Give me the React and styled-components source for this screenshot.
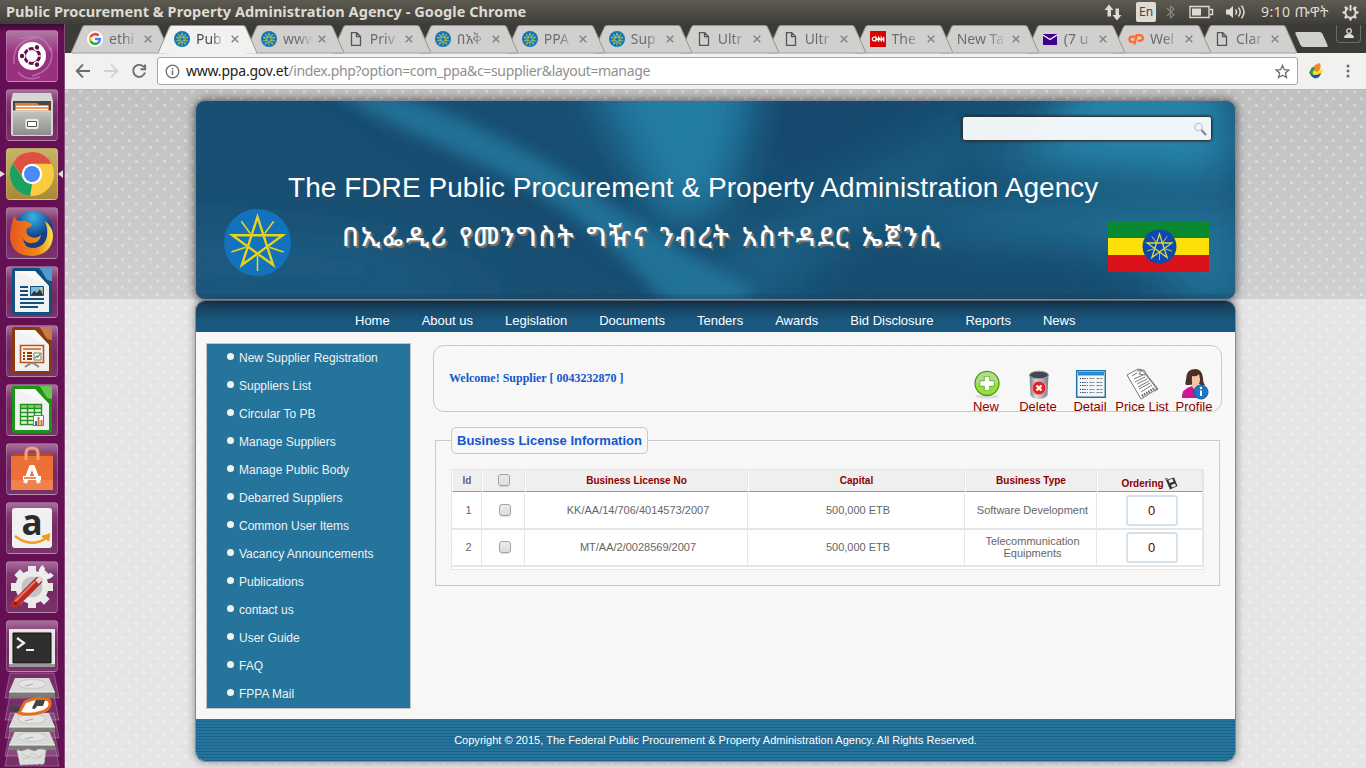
import React from "react";
import styled, { createGlobalStyle, css } from "styled-components";

const ui = '"Noto Sans", "Open Sans", "Noto Sans Ethiopic", "Abyssinica SIL", sans-serif';
const arial = '"Liberation Sans", Arial, sans-serif';

const Global = createGlobalStyle`
  * { box-sizing: border-box; }
  body { margin: 0; overflow: hidden; background: #e6e6e6; }
`;

const Desktop = styled.div`
  width: 1366px;
  height: 768px;
  overflow: hidden;
  display: grid;
  grid-template: 24px 744px / 65px 1301px;
  font-family: ${arial};
`;

/* ---------- top panel ---------- */
const Panel = styled.header`
  grid-column: 1 / 3;
  display: flex;
  align-items: center;
  justify-content: space-between;
  padding: 0 7px 0 6px;
  background: linear-gradient(#5d5b50, #3f3e39);
  color: #dfdbd2;
  font-family: ${ui};
`;
const WindowTitle = styled.div`
  font-weight: 700;
  font-size: 14.5px;
  letter-spacing: 0.055px;
  line-height: 22px;
  padding-bottom: 2px;
  white-space: nowrap;
`;
const Tray = styled.div`
  display: flex;
  align-items: center;
  height: 24px;
`;
const Lang = styled.span`
  width: 20px;
  height: 20px;
  margin: 0 10px 0 14px;
  border-radius: 2px;
  background: #dfdbd2;
  color: #45443e;
  font-size: 12px;
  line-height: 20px;
  text-align: center;
`;
const Clock = styled.span`
  width: 68px;
  margin: 0 13px 0 15px;
  font-size: 14px;
  letter-spacing: 0.4px;
  line-height: 24px;
  white-space: nowrap;
`;

/* ---------- launcher ---------- */
const Launcher = styled.aside`
  display: flex;
  flex-direction: column;
  align-items: center;
  gap: 7px;
  padding: 6px 1px 0 0;
  background: linear-gradient(#3d0a33 0, #651054 8px, #651054 100%);
  border-right: 1px solid #8a4c7d;
`;
const Tile = styled.div`
  position: relative;
  flex: none;
  width: 52px;
  height: 52px;
  border-radius: 4px;
  border: 1px solid rgba(255, 255, 255, 0.2);
  background: ${(p) => p.$bg || "linear-gradient(#a8709b 0, #80386f 12px, #742864 30px, #7b336b 100%)"};
  svg { display: block; margin: -1px; }
`;
const Marker = styled.i`
  position: absolute;
  top: 21px;
  ${(p) => (p.$right ? "right: -6px; border-right: 5px solid #ddd;" : "left: -8px; border-left: 6px solid #ddd;")}
  border-top: 4px solid transparent;
  border-bottom: 4px solid transparent;
`;
const Stack = styled.svg`
  flex: none;
  display: block;
  margin-top: -7px;
`;

/* ---------- browser ---------- */
const Browser = styled.main`
  display: flex;
  flex-direction: column;
  min-width: 0;
`;
const TabStrip = styled.div`
  display: flex;
  height: 29px;
  padding: 1px 3px 0 6px;
  background: #3c3b37;
`;
const TabBox = styled.div`
  position: relative;
  flex: none;
  display: flex;
  align-items: center;
  width: 99px;
  height: 28px;
  margin-right: ${(p) => (p.$order < 9 ? -12.05 : -12.9)}px;
  padding: 0 12px 0 ${(p) => (p.$noIcon ? 17 : 16)}px;
  z-index: ${(p) => (p.$active ? 30 : 20 - p.$order)};
  font-family: ${ui};
  font-size: 14px;
  color: ${(p) => (p.$active ? "#4a4a4a" : "#6d6d6d")};
`;
const TabShape = styled.svg`
  position: absolute;
  left: 0;
  top: 0;
  z-index: -1;
`;
const TabLabel = styled.span`
  flex: none;
  width: ${(p) => (p.$wide ? 50 : 33)}px;
  margin-left: ${(p) => (p.$wide ? 0 : 6)}px;
  white-space: nowrap;
  line-height: 24px;
  mask-image: linear-gradient(90deg, #000 ${(p) => (p.$wide ? 30 : 15)}px, transparent ${(p) => (p.$wide ? 50 : 30)}px);
`;
const CloseX = styled.svg`
  flex: none;
  margin-left: ${(p) => (p.$wide ? 5 : 2)}px;
`;
const NewTab = styled.i`
  width: 27px;
  height: 15px;
  margin: 7px 0 0 14px;
  flex: none;
  border-radius: 2px;
  transform: skewX(24deg);
  background: #d2d0ce;
`;
const UserButton = styled.div`
  width: 25px;
  height: 18px;
  margin-left: 11px;
  border: 1px solid #6d6b66;
  border-top: 0;
  border-radius: 0 0 4px 4px;
  display: grid;
  place-items: center;
`;
const Toolbar = styled.div`
  height: 37px;
  display: flex;
  align-items: center;
  padding: 0 8px 0 10px;
  background: #f2f1f0;
  border-bottom: 1px solid #b9b8b6;
`;
const NavIcons = styled.div`
  display: flex;
  gap: 12px;
  width: 82px;
`;
const Address = styled.div`
  flex: none;
  width: 1141px;
  height: 28px;
  display: flex;
  align-items: center;
  padding: 0 7px;
  border: 1px solid #a9a8a6;
  border-radius: 3px;
  background: #fff;
  font-family: ${ui};
  font-size: 14px;
  color: #8f8f8f;
  b { font-weight: 400; color: #222; letter-spacing: -0.2px; }
`;
const Url = styled.span`
  flex: 1;
  margin-left: 6px;
  letter-spacing: -0.34px;
  line-height: 24px;
`;

/* ---------- web page ---------- */
const dot = (c) => `conic-gradient(from 270deg at 3px 3px, ${c} 90deg, transparent 0)`;
const Page = styled.div`
  flex: 1;
  padding: 10px 130px 0;
  background-color: #e5e5e5;
  background-image: ${dot("rgba(255,255,255,.3)")}, ${dot("rgba(255,255,255,.3)")},
    linear-gradient(#c0c0c0, #d0d0d0);
  background-size: 14px 14px, 14px 14px, 100% 209px;
  background-position: 0 0, 7px 7px, 0 0;
  background-repeat: repeat, repeat, no-repeat;
`;
const Banner = styled.div`
  position: relative;
  height: 200px;
  border: 1px solid #8b8792;
  border-radius: 10px;
  overflow: hidden;
  box-shadow: 0 0 10px rgba(0, 0, 0, 0.6);
  background: #194f72;
  display: grid;
  grid-template: 107px 1fr / 92px 1fr 127px;
  isolation: isolate;
  color: #fff;
`;
const Waves = styled.svg`
  position: absolute;
  inset: 0;
  z-index: -1;
`;
const TopLine = styled.div`
  grid-column: 1 / 4;
  display: flex;
  flex-direction: column;
  align-items: flex-end;
  padding: 15px 23px 0 0;
`;
const Search = styled.div`
  width: 250px;
  height: 25px;
  display: flex;
  align-items: center;
  justify-content: flex-end;
  padding-right: 4px;
  border: 1px solid #30353b;
  border-radius: 3px;
  background: rgba(255, 255, 255, 0.93);
  box-shadow: 0 0 3px rgba(0, 0, 0, 0.7);
`;
const SiteTitle = styled.h1`
  align-self: flex-start;
  margin: 29px 0 0 92px;
  font: 400 28px/36px ${arial};
  white-space: nowrap;
  letter-spacing: 0.045px;
`;
const EmblemCell = styled.div`
  padding: 1px 0 0 28px;
`;
const Amharic = styled.h2`
  margin: 8px 0 0 54px;
  font: 500 27px/40px "Noto Sans Ethiopic", "Abyssinica SIL", "FreeSerif", ${arial};
  letter-spacing: 1.8px;
  word-spacing: 2px;
  text-shadow: 2px 2px 1px #85776f;
  white-space: nowrap;
`;
const FlagCell = styled.div`
  padding-top: 13px;
`;
const Body = styled.div`
  height: 462px;
  border: 1px solid #8b8792;
  border-radius: 10px;
  overflow: hidden;
  box-shadow: 0 0 8px rgba(0, 0, 0, 0.4);
  display: grid;
  grid-template: 31px 387px 1fr / 1fr;
  background-color: #f7f7f7;
  background-image: ${dot("#f9f9f9")}, ${dot("#f9f9f9")};
  background-size: 14px 14px;
  background-position: 9px 13px, 2px 6px;
`;
const Menu = styled.nav`
  display: flex;
  gap: 32px;
  padding: 8px 0 0 159px;
  background: linear-gradient(#173c54, #19577f 65%, #1a5880);
  color: #fff;
  font-size: 13px;
  line-height: 24px;
  white-space: nowrap;
`;
const Columns = styled.div`
  display: flex;
  padding: 12px 13px 0 10px;
  gap: 22px;
  align-items: flex-start;
`;
const Side = styled.ul`
  flex: none;
  width: 205px;
  height: 366px;
  margin: -1px 0 0;
  padding: 0 0 0 20px;
  list-style: none;
  border: 1px solid #c3c3c3;
  background: #24749b;
`;
const SideItem = styled.li`
  display: flex;
  align-items: center;
  height: 28px;
  font-size: 12px;
  color: #f2f2f2;
  &::before {
    content: "";
    width: 7px;
    height: 7px;
    margin: -4px 5px 0 0;
    border-radius: 50%;
    background: #f3f3f3;
  }
`;
const Content = styled.div`
  flex: 1;
  padding-top: 1px;
`;
const WelcomeBox = styled.section`
  height: 67px;
  display: flex;
  justify-content: space-between;
  border: 1px solid #c9c9c9;
  border-radius: 11px;
  padding: 0 1px 0 15px;
`;
const Welcome = styled.div`
  margin-top: 24px;
  font: 700 12px/16px "Liberation Serif", "Times New Roman", serif;
  color: #1556cc;
`;
const Actions = styled.div`
  display: flex;
  padding-top: 22px;
`;
const Action = styled.div`
  width: 52px;
  display: flex;
  flex-direction: column;
  align-items: center;
  font-size: 13px;
  line-height: 15px;
  color: #8b0000;
  white-space: nowrap;
  svg { flex: none; margin-bottom: -1px; }
`;
const Fieldset = styled.fieldset`
  margin: 15px 2px 0;
  height: 159px;
  padding: 15px 15px 0;
  border: 1px solid #c9c9c9;
  min-width: 0;
`;
const Legend = styled.legend`
  height: 27px;
  padding: 0 5px;
  border: 1px solid #c9c9c9;
  border-radius: 5px;
  color: #1556cc;
  font: 700 13px/25px ${arial};
`;
const Grid = styled.div`
  width: 753px;
  height: 101px;
  border: 1px solid #e6e6e6;
  background: #fff;
`;
const Row = styled.div`
  display: grid;
  grid-template-columns: 30px 43px 223px 217px 132px 106px;
  height: ${(p) => (p.$head ? 22 : 37)}px;
  margin-bottom: ${(p) => (p.$head ? 1 : 0)}px;
  font-size: ${(p) => (p.$head ? 10 : 11)}px;
  line-height: 12px;
  color: #666;
`;
const cell = css`
  display: flex;
  align-items: center;
  justify-content: center;
  text-align: center;
  border-right: 1px solid #e6e6e6;
`;
const HeadCell = styled.div`
  ${cell}
  font-weight: 700;
  color: ${(p) => (p.$plain ? "#666" : "#8b0000")};
  background: #efefef;
  border-left: 1px solid #fff;
  border-bottom: 1px solid #999;
  padding-top: ${(p) => p.$drop || 0}px;
  padding-bottom: ${(p) => (p.$raise ? 2 : 0)}px;
`;
const Cell = styled.div`
  ${cell}
  border-bottom: 2px solid #e6e6e6;
  padding-left: ${(p) => p.$indent || 0}px;
  padding-bottom: ${(p) => p.$lift || 0}px;
`;
const Check = styled.input`
  appearance: none;
  width: 12px;
  height: 12px;
  margin: 0;
  border: 1px solid #a3a3a3;
  border-radius: 3px;
  background: linear-gradient(#ececec, #dcdcdc);
  box-shadow: 0 1px 1px rgba(0, 0, 0, 0.12);
`;
const Order = styled.span`
  width: 52px;
  height: 31px;
  margin-left: 4px;
  border: 2px solid #d3e2ec;
  border-radius: 3px;
  font-size: 13px;
  line-height: 27px;
  color: #6b0000;
`;
const Footer = styled.footer`
  background: repeating-linear-gradient(#24749b 0 2px, #1d628a 2px 3px);
  color: #fff;
  font-size: 11px;
  letter-spacing: 0.02px;
  line-height: 43px;
  text-align: center;
`;

/* ---------- drawings ---------- */
const starPoints = (cx, cy, r) =>
  [0, 2, 4, 1, 3]
    .map((k) => {
      const a = -Math.PI / 2 + (k * 2 * Math.PI) / 5;
      return `${(cx + r * Math.cos(a)).toFixed(2)},${(cy + r * Math.sin(a)).toFixed(2)}`;
    })
    .join(" ");

function Emblem({ w, h, fill = "#1272bc", stroke = "#e6d41c", sw = 2.4, ray = 1.6 }) {
  return (
    <svg width={w} height={h} viewBox="0 0 68 68" preserveAspectRatio="none" style={{ display: "block" }}>
      <ellipse cx="34" cy="34" rx="34" ry="34" fill={fill} />
      <g stroke={stroke} strokeWidth={sw} fill="none">
        <polygon points={starPoints(34, 35, 27)} />
        {[36, 108, 180, 252, 324].map((d) => (
          <path key={d} d="M34 22.500V7" strokeWidth={ray} transform={`rotate(${d} 34 35)`} />
        ))}
      </g>
    </svg>
  );
}

const TabIcons = {
  google: (
    <svg width="16" height="16" viewBox="0 0 16 16" fill="none" strokeWidth="2.6">
      <circle cx="8" cy="8" r="8" fill="#fff" />
      <path d="M11.6 4.6A4.9 4.9 0 0 0 3.6 6" stroke="#ea4335" />
      <path d="M3.6 5.8a4.9 4.9 0 0 0 0 4.4" stroke="#fbbc05" />
      <path d="M3.6 10a4.9 4.9 0 0 0 7.8 1.6" stroke="#34a853" />
      <path d="M8 8h5a4.9 4.9 0 0 1-1.8 3.8" stroke="#4285f4" strokeWidth="2.3" />
    </svg>
  ),
  star: <Emblem w={16} h={16} fill="#1273bd" stroke="#a3bf55" sw={4} ray={4} />,
  doc: (
    <svg width="16" height="16" viewBox="0 0 16 16">
      <path d="M3.5 1.7h5.2l3.8 3.8v8.8h-9z M8.5 1.9v3.8h3.8" fill="none" stroke="#555" strokeWidth="1.3" />
    </svg>
  ),
  cnn: (
    <svg width="16" height="16" viewBox="0 0 16 16">
      <path fill="#d80000" d="M0 0h16v16H0z" />
      <path d="M5.400 6.100H4.400Q2.300 6.100 2.300 8t2.100 1.900h1.500V6.300l2.700 3.500V6.300l2.700 3.500V6.300l2.500 3.500V5.800" fill="none" stroke="#fff" strokeWidth="1.200" />
    </svg>
  ),
  mail: (
    <svg width="16" height="16" viewBox="0 0 16 16">
      <path fill="#400090" d="M1 3h14v11H1z" />
      <path d="M1 4l7 4.5L15 4" fill="none" stroke="#fff" strokeWidth="1.4" />
    </svg>
  ),
  cp: (
    <svg width="16" height="16" viewBox="0 0 16 16" fill="none" stroke="#ff6c2c" strokeWidth="2.3">
      <path d="M7.500 5.600H4.200a2.700 2.700 0 0 0 0 5.400h1.300M6.200 13.500l2.700-9.400h3a2.900 2.900 0 0 1 0 5.800H10" />
    </svg>
  ),
};

const tabs = [
  ["google", "ethi"], ["star", "Pub", true], ["star", "www"], ["doc", "Priv"],
  ["star", "በአቅ"], ["star", "PPA"], ["star", "Sup"], ["doc", "Ultr"], ["doc", "Ultr"],
  ["cnn", "The"], [null, "New Ta"], ["mail", "(7 u"], ["cp", "Wel"], ["doc", "Clar"],
];

function Tab({ icon, label, active, order }) {
  const fill = active ? "#f2f1f0" : "#d2d0ce";
  return (
    <TabBox $active={active} $noIcon={!icon} $order={order}>
      <TabShape width="99" height="29">
        <path d="M0 28L11.500 2Q12 .5 14 .5H85Q87 .5 87.500 2L99 28Z" fill={fill} />
        <path d="M0 28L11.500 2Q12 .5 14 .5H85Q87 .5 87.500 2L99 28" fill="none" stroke="#98968f" />
        <path d="M1 28H98" stroke={active ? fill : "#a09f9c"} />
      </TabShape>
      {icon && TabIcons[icon]}
      <TabLabel $wide={!icon}>{label}</TabLabel>
      <CloseX width="8" height="8" $wide={!icon}>
        <path d="M.7.7l6.6 6.6M7.3.7L.7 7.3" stroke="#858585" strokeWidth="1.5" />
      </CloseX>
    </TabBox>
  );
}

function LibreDoc({ c, fold, children }) {
  return (
    <svg width="52" height="52">
      <path d="M8 2h25l13 14v30q0 3-3 3H9q-3 0-3-3V4q0-2 2-2z" fill={c} />
      <path d="M34 2h10q2 0 2 2v11q-5 0-7-4z" fill={fold} />
      <path d="M9 5h20l14 15v26H9z" fill="#f1f1f1" />
      <path d="M9 5h20l14 15z" fill="#fff" opacity=".5" />
      {children}
    </svg>
  );
}

const launcherItems = [
  {
    bg: "linear-gradient(#b07aa4, #98307f 45%, #99317f)",
    art: (
      <svg width="52" height="52">
        <path d="M8 34Q6 10 30 8M45 17Q50 40 26 46M14 9Q38 0 45 22M12 42Q20 52 34 47" fill="none" stroke="#c581b6" strokeWidth="1.500" opacity=".7" />
        <circle cx="26" cy="26" r="14" fill="#fff" />
        <circle cx="26" cy="26" r="7.500" fill="none" stroke="#611051" strokeWidth="3" />
        {[0, 120, 240].map((d) => (
          <g key={d} transform={`rotate(${d} 26 26)`}>
            <circle cx="16.200" cy="26" r="3.400" fill="#fff" />
            <circle cx="16" cy="26" r="2.200" fill="#611051" />
            <path d="M32 26h5" stroke="#fff" strokeWidth="1.300" />
          </g>
        ))}
      </svg>
    ),
  },
  {
    art: (
      <svg width="52" height="52">
        <defs><linearGradient id="steel" x2="0" y2="1"><stop offset="0" stopColor="#c4c4c2" /><stop offset="1" stopColor="#8d8d8a" /></linearGradient></defs>
        <path d="M7 4h38l2 8v33q0 2-2 2H7q-2 0-2-2V12z" fill="#d6d6d6" />
        <path d="M7 12h38v14H7z" fill="#4a4744" />
        <path d="M9 14h22l2 2h10v9H9z" fill="#e27b35" />
        <path d="M10 17.500h32M10 20.500h32" stroke="#fff" strokeWidth="1.300" />
        <path d="M7 22h38v24H7z" fill="url(#steel)" />
        <path d="M7 22h38" stroke="#ddd" />
        <rect x="19.500" y="30" width="13" height="10" rx="2" fill="#eee" />
        <path d="M21.500 32.500h9v5h-9z" fill="#fff" stroke="#555" />
      </svg>
    ),
  },
  {
    bg: "linear-gradient(#c9b26a, #a98a35)",
    marked: true,
    art: (
      <svg width="52" height="52">
        <circle cx="26" cy="26" r="22" fill="#fbcb3e" />
        <path d="M6.900 15L17.500 31 26 36.500 24 48A22 22 0 0 1 6.900 15z" fill="#1aa15f" />
        <path d="M7 15L18 31A11 11 0 0 1 26 15.800H45.500A22 22 0 0 0 7 15z" fill="#dd5145" />
        <circle cx="26" cy="26" r="10.200" fill="#fff" />
        <circle cx="26" cy="26" r="8" fill="#4a8af4" />
      </svg>
    ),
  },
  {
    art: (
      <svg width="52" height="52">
        <defs>
          <radialGradient id="sea" cx=".5" cy=".15"><stop offset="0" stopColor="#36b6e8" /><stop offset="1" stopColor="#123f86" /></radialGradient>
          <linearGradient id="fox" x1="0" x2="1"><stop offset="0" stopColor="#e8551c" /><stop offset=".65" stopColor="#f08a1c" /><stop offset="1" stopColor="#ffe14a" /></linearGradient>
        </defs>
        <circle cx="27" cy="24" r="20" fill="url(#sea)" />
        <path d="M8 9q2 5 6 5 5-1 8 1l4 2q0 3-5 4-2 5 2 8 7 4 12-1-1 7-8 8-8 1-10-5 1 11 12 10 14-3 12-20l-2-7q8 6 8 15-1 18-20 20Q4 49 4 28 5 18 8 9z" fill="url(#fox)" />
      </svg>
    ),
  },
  {
    art: (
      <LibreDoc c="#12507e" fold="#4c9dcb">
        <path d="M14 21h8M14 25h8M14 29h8M14 33h24M14 37h24M14 41h18" stroke="#12507e" strokeWidth="2" />
        <path d="M24.500 20.500h13v9h-13z" fill="#7fb9df" stroke="#12507e" />
        <path d="M25 29l3-4 3 2 3-4 3 6z" fill="#333" />
        <circle cx="35" cy="22.500" r="1.500" fill="#f5d130" />
      </LibreDoc>
    ),
  },
  {
    art: (
      <LibreDoc c="#8c3a0c" fold="#c47c48">
        <path d="M14.500 20.500h23v17h-23z" fill="#faf1e8" stroke="#bb541c" strokeWidth="1.600" />
        <path d="M17 24h18" stroke="#c9642c" strokeWidth="1.600" />
        <path d="M17 28h2M17 31h2M17 34h2M21 28h5M21 31h5M21 34h5" stroke="#8c3a0c" strokeWidth="1.800" />
        <path d="M28 28h7v7h-7z" fill="#fff" stroke="#777" />
        <path d="M29 33l2-2 1 1 2-3" fill="none" stroke="#32a336" strokeWidth="1.300" />
        <path d="M19 42l6-4h2l6 4" fill="none" stroke="#888" strokeWidth="2" />
      </LibreDoc>
    ),
  },
  {
    art: (
      <LibreDoc c="#1c9415" fold="#62c84f">
        <path d="M14 20h22v21H14z" fill="#eaf8e6" />
        <path d="M14 20h22v4H14z" fill="#86d46f" />
        <path d="M14.500 20.500h21v20h-21zM14 24.500h22M14 28.500h22M14 32.500h22M14 36.500h22M21.500 20v21M28.500 20v21" fill="none" stroke="#25901e" strokeWidth="1.400" />
        <path d="M27.500 31.500h10v10h-10z" fill="#fff" stroke="#777" />
        <path d="M32.500 41v-8M35.500 41v-5" stroke="#d0742a" strokeWidth="2" />
        <path d="M30 41v-4" stroke="#2a6fc0" strokeWidth="2" />
      </LibreDoc>
    ),
  },
  {
    art: (
      <svg width="52" height="52">
        <path d="M5 14l3-4h36l3 4z" fill="#b94a20" />
        <path d="M5 13h42v34H5z" fill="#ec6f36" />
        <path d="M5 37h42v10H5z" fill="#f2814d" />
        <path d="M20 17V10q0-5 6-5t6 5v7" fill="none" stroke="#f5a07a" strokeWidth="3" />
        <path d="M19 40l6-16h2l6 16M17 35h18" fill="none" stroke="#fff" strokeWidth="4" />
        <path d="M18 35h12" stroke="#ec6f36" strokeWidth="1.600" />
      </svg>
    ),
  },
  {
    art: (
      <svg width="52" height="52">
        <rect x="6" y="6" width="40" height="40" rx="3" fill="#f1f1f1" />
        <text x="26" y="33" textAnchor="middle" fontFamily="Open Sans, sans-serif" fontWeight="700" fontSize="35" fill="#2b2b2b">a</text>
        <path d="M9 34q16 13 33 1M36 35l7-2-1 6" fill="none" stroke="#f79a1c" strokeWidth="2.400" />
      </svg>
    ),
  },
  {
    art: (
      <svg width="52" height="52">
        {[0, 45, 90, 135].map((d) => (
          <path key={d} d="M22 5h8v42h-8z" fill="#e8e8e8" transform={`rotate(${d} 26 26)`} />
        ))}
        <circle cx="26" cy="26" r="13.500" fill="#c4c4c4" stroke="#ebebeb" strokeWidth="6" />
        <path d="M9 43L32 20" stroke="#c02822" strokeWidth="8" strokeLinecap="round" />
        <path d="M9 40.500L29 20.500" stroke="#ea7a70" strokeWidth="1.800" />
        <path d="M31 21l5-5" stroke="#d8d8d8" strokeWidth="5" />
        <path d="M38 6q-5 3-2 8 5 5 10-1" fill="none" stroke="#f0f0f0" strokeWidth="4.500" />
        <circle cx="9.500" cy="42.500" r="1.300" fill="#610" />
      </svg>
    ),
  },
  {
    art: (
      <svg width="52" height="52">
        <path d="M3 9h46v38H3z" fill="#e6e6e6" />
        <path d="M3 44h46v3H3z" fill="#999" />
        <path d="M7 13h38v30H7z" fill="#2f2f2d" stroke="#111" />
        <path d="M11 18l7 5-7 5M20 30h8" fill="none" stroke="#eee" strokeWidth="2.200" />
      </svg>
    ),
  },
];

function FoldedStack() {
  const disk = (y) => (
    <g key={y} transform={`translate(0 ${y})`}>
      <path d="M15 6h34l6 14v5H9v-5z" fill="#d9d9d7" />
      <path d="M9 20h46v5H9z" fill="#7b7b78" />
      <path d="M9 20h46" stroke="#f2f2f0" />
      <ellipse cx="32" cy="12" rx="14" ry="4.500" fill="#e4e4e2" stroke="#c8c8c6" />
      <path d="M25 14l8-2" stroke="#aaa" />
    </g>
  );
  return (
    <Stack width="64" height="95" viewBox="0 0 64 95">
      {[0, 22, 40, 58, 68].map((y) => (
        <path key={y} d={`M10 ${y + 1}h44l5 25H5z`} fill="rgba(255,255,255,.13)" stroke="rgba(255,255,255,.25)" />
      ))}
      {disk(53)}
      {disk(35)}
      <path d="M19 41l6-11q13-6 24-2 4 8-7 12-12 4-23 1z" fill="#fff" stroke="#ea6c1d" strokeWidth="3" />
      <path d="M32 36l4-8h9l-2 6h-6q-2 5-5 2z" fill="#444" />
      <ellipse cx="15" cy="37" rx="5" ry="3" fill="#444" />
      {disk(0)}
      <path d="M17 78l5 1 6-2 6 2 6-2 6 1-2 14-24 1z" fill="#dededb" stroke="#b9b9b4" strokeDasharray="3 2" />
      <path d="M22 82l6 3 5-4 5 4 5-3M23 87l7-2 6 2 6-2" fill="none" stroke="#c4c4c0" />
    </Stack>
  );
}

function StatusTray() {
  const c = "#dfdbd2";
  return (
    <Tray>
      <svg width="18" height="18" viewBox="0 0 18 18" fill={c}>
        <path d="M5 1.500L.5 7H3.500V13.500H7V7H9.500zM13 17.500l-4.500-5.500h3V5.500H15v6.500h2.500z" />
      </svg>
      <Lang>En</Lang>
      <svg width="10" height="16" viewBox="0 0 10 16"><path d="M1 4l7 7-3.500 3V2L8 5l-7 7" fill="none" stroke="#85837b" strokeWidth="1.200" /></svg>
      <svg width="25" height="14" viewBox="0 0 25 14" style={{ marginLeft: 13 }}>
        <path d="M1 1.500h19v11H1zM21 4.500h2.500v5H21" fill="none" stroke={c} strokeWidth="1.400" />
        <path d="M3 3.500h9v7H3z" fill={c} />
      </svg>
      <svg width="21" height="16" viewBox="0 0 21 16" style={{ marginLeft: 11 }}>
        <path d="M1 5.500h3L8 2v12l-4-3.500H1z" fill={c} />
        <path d="M10.500 5.500q2 2.500 0 5M13.500 3.500q3.500 4.500 0 9M16.500 1.500q5 6.500 0 13" fill="none" stroke={c} strokeWidth="1.500" />
      </svg>
      <Clock>9:10 ጡዋት</Clock>
      <svg width="17" height="17" viewBox="0 0 17 17" fill="none" stroke={c}>
        <path d="M6 4a5.200 5.200 0 1 0 5 0" strokeWidth="2" />
        <path d="M8.500 1v6" strokeWidth="2" />
        {[45, 90, 135, 180, 225, 270, 315].map((d) => (
          <path key={d} d="M8.500 3V.5" strokeWidth="2.300" transform={`rotate(${d} 8.500 8.500)`} />
        ))}
      </svg>
    </Tray>
  );
}

const actionItems = [
  ["New", (
    <svg width="32" height="32">
      <ellipse cx="17" cy="28.500" rx="12" ry="2" fill="#ddd" />
      <circle cx="17" cy="15.500" r="12" fill="#94e03c" stroke="#4d9c1b" strokeWidth="1.300" />
      <path d="M6 15a11 11 0 0 1 22 0z" fill="#b9d9a5" opacity=".8" />
      <path d="M17 8v15M9.500 15.500h15" stroke="#68b52c" strokeWidth="6.500" />
      <path d="M17 8.800v13.400M10.300 15.500h13.400" stroke="#fff" strokeWidth="4.500" />
    </svg>
  )],
  ["Delete", (
    <svg width="32" height="32">
      <defs><linearGradient id="can"><stop offset="0" stopColor="#777783" /><stop offset=".35" stopColor="#dcdce2" /><stop offset="1" stopColor="#7d7d89" /></linearGradient></defs>
      <path d="M7.500 6h19l-1 21q-2 4-8.500 4t-8.500-4z" fill="url(#can)" />
      <ellipse cx="17" cy="7" rx="9.500" ry="3.800" fill="#454750" stroke="#a0a0aa" />
      <circle cx="17" cy="20" r="6.800" fill="#df2427" stroke="#f78d8d" />
      <path d="M14.500 17.500l5 5M19.500 17.500l-5 5" stroke="#fff" strokeWidth="2.300" />
    </svg>
  )],
  ["Detail", (
    <svg width="32" height="32">
      <path d="M2.700 2.700h28.600v26.600H2.700z" fill="#f4f7fa" stroke="#2273a9" strokeWidth="1.500" />
      <path d="M4 4h26v3.500H4z" fill="#258bd2" />
      <path d="M6 10.500h3M6 14.500h3M6 17.500h3M6 21.500h3M6 24.500h3" stroke="#223f77" strokeDasharray="1 1" />
      <path d="M9 10.500h5M9 14.500h5M9 17.500h5M9 21.500h5M9 24.500h5M15.500 10.500h5M15.500 14.500h5M15.500 17.500h5M15.500 21.500h5M15.500 24.500h5M22.500 10.500h6M22.500 14.500h6M22.500 17.500h6M22.500 21.500h6M22.500 24.500h6" stroke="#7a8289" strokeDasharray="3 .7" />
    </svg>
  )],
  ["Price List", (
    <svg width="34" height="32" viewBox="0 0 34 32" fill="none" stroke="#666" strokeWidth=".9">
      <path d="M2 7L13 1l4 1 15 19-16 10z" fill="#fff" />
      <path d="M12 3l7-1 3 5 11 14-3 2" />
      <path d="M17 2l-3 4 6 1M7 8l5-3M9 11l9-4M10 14l10-5M12 16l10-5M13 19l11-6M14 21l11-6M16 24l11-7" />
      <path d="M17 28l13-8" strokeWidth="2.600" strokeDasharray="1.500 1" />
    </svg>
  )],
  ["Profile", (
    <svg width="32" height="32">
      <path d="M10 17Q6 18 8 12 8 1 17 1q7 0 8 9 0 5 2 7-3 1-6-1z" fill="#4a2f2a" />
      <path d="M14 8q5 1 7-2 3 10-3 13-5 0-4-11z" fill="#f3c5a0" />
      <path d="M4 30q-1-9 10-12l2 3 4-3q7 2 6 12z" fill="#d31395" />
      <path d="M14 18l3 4 3-4v-3h-6z" fill="#f3c5a0" />
      <circle cx="23" cy="24" r="7" fill="#1d77c4" stroke="#0d5da3" />
      <path d="M23 22.500V28" stroke="#fff" strokeWidth="2" />
      <circle cx="23" cy="20" r="1.200" fill="#fff" />
    </svg>
  )],
];

const sideItems = ["New Supplier Registration", "Suppliers List", "Circular To PB", "Manage Suppliers", "Manage Public Body", "Debarred Suppliers", "Common User Items", "Vacancy Announcements", "Publications", "contact us", "User Guide", "FAQ", "FPPA Mail"];
const menuItems = ["Home", "About us", "Legislation", "Documents", "Tenders", "Awards", "Bid Disclosure", "Reports", "News"];
const rows = [
  [1, "KK/AA/14/706/4014573/2007", "500,000 ETB", "Software Development"],
  [2, "MT/AA/2/0028569/2007", "500,000 ETB", "Telecommunication Equipments"],
];

function BannerWaves() {
  return (
    <Waves width="1039" height="198" viewBox="0 0 1039 198">
      <defs>
        <filter id="b1" x="-50%" y="-50%" width="200%" height="200%"><feGaussianBlur stdDeviation="8" /></filter>
        <filter id="b2" x="-50%" y="-80%" width="200%" height="260%"><feGaussianBlur stdDeviation="22" /></filter>
      </defs>
      <path d="M-20-20H110Q230 60 470 180V140L300 60 130-20z" fill="#15446a" opacity=".6" filter="url(#b2)" />
      <path d="M-20 120L180 140 330 198H-20z" fill="#1c5a80" filter="url(#b2)" />
      <path d="M385-40H565Q550 60 520 110L470 125Q430 40 385-40z" fill="#2785ad" opacity=".85" filter="url(#b2)" />
      <path d="M130-12L200-8Q330 40 410 100 480 145 560 190L535 215H480Q400 115 290 66 190 22 130-12z" fill="#2580a6" opacity=".72" filter="url(#b1)" />
      <path d="M580-20H750Q700 30 570 80z" fill="#15456a" opacity=".75" filter="url(#b2)" />
      <path d="M540 140Q640 90 760 30L800 40Q640 150 580 198H500z" fill="#23739a" opacity=".45" filter="url(#b2)" />
      <path d="M870-30H1030L1039 80Q930 80 770 55 880 40 870-30z" fill="#2b8db4" opacity=".85" filter="url(#b2)" />
      <path d="M680 130Q800 95 1050 100V210H990Q980 140 800 145z" fill="#277fa6" opacity=".7" filter="url(#b2)" />
      <path d="M620 170Q750 130 900 165V190H620z" fill="#16466a" opacity=".6" filter="url(#b2)" />
      <path d="M0 196h1039v6H0z" fill="#163a56" filter="url(#b1)" />
    </Waves>
  );
}

export default function App() {
  return (
    <Desktop>
      <Global />
      <Panel>
        <WindowTitle>Public Procurement &amp; Property Administration Agency - Google Chrome</WindowTitle>
        <StatusTray />
      </Panel>
      <Launcher>
        {launcherItems.map((it, i) => (
          <Tile key={i} $bg={it.bg}>
            {it.art}
            {it.marked && <><Marker /><Marker $right /></>}
          </Tile>
        ))}
        <FoldedStack />
      </Launcher>
      <Browser>
        <TabStrip>
          {tabs.map(([icon, label, active], i) => <Tab key={i} order={i} icon={icon} label={label} active={active} />)}
          <NewTab />
          <UserButton>
            <svg width="12" height="11"><circle cx="6" cy="3" r="2.300" fill="none" stroke="#ddd" strokeWidth="1.300" /><path d="M1.500 9.500q0-3 4.500-3t4.500 3z" fill="#ddd" stroke="#ddd" /></svg>
          </UserButton>
        </TabStrip>
        <Toolbar>
          <NavIcons>
            <svg width="16" height="16" fill="none" stroke="#6c6c6c" strokeWidth="1.800"><path d="M15 8H2M8 1.500L1.700 8 8 14.500" /></svg>
            <svg width="16" height="16" fill="none" stroke="#d3d2d1" strokeWidth="1.800"><path d="M1 8h13M8 1.500L14.300 8 8 14.500" /></svg>
            <svg width="16" height="16" fill="none" stroke="#6c6c6c" strokeWidth="1.900"><path d="M13 4.200A6 6 0 1 0 14 9.500M9.500 6.300h4.600V1.500" /></svg>
          </NavIcons>
          <Address>
            <svg width="15" height="15" fill="none" stroke="#6c6c6c" strokeWidth="1.300"><circle cx="7.500" cy="7.500" r="6.300" /><path d="M7.500 6.500V11M7.500 4v1.500" strokeWidth="1.500" /></svg>
            <Url><b>www.ppa.gov.et</b>/index.php?option=com_ppa&amp;c=supplier&amp;layout=manage</Url>
            <svg width="15" height="15" viewBox="0 0 15 15" fill="none" stroke="#6c6c6c" strokeWidth="1.300"><path d="M7.500 1.500l1.800 4.200 4.500.4-3.400 3 1 4.400-3.900-2.300-3.900 2.300 1-4.400-3.400-3 4.500-.4z" /></svg>
          </Address>
          <svg width="16" height="16" viewBox="0 0 16 16" style={{ marginLeft: 10 }}>
            <path d="M3 9Q5 1 12 0q2 5-2 9z" fill="#f28a2c" />
            <path d="M1 10q3-4 8-1l6-3q-1 7-7 9-5 0-7-5z" fill="#f5e71d" />
            <path d="M2 10q5 4 11 0-1 5-6 5.500Q3 14 2 10z" fill="#2253ae" />
            <path d="M4 4L1 10l4 2q-1-4 2-7z" fill="#279947" />
          </svg>
          <svg width="4" height="14" fill="#6c6c6c" style={{ marginLeft: 22 }}><circle cx="2" cy="2" r="1.500" /><circle cx="2" cy="7" r="1.500" /><circle cx="2" cy="12" r="1.500" /></svg>
        </Toolbar>
        <Page>
          <Banner>
            <BannerWaves />
            <TopLine>
              <Search>
                <svg width="13" height="14" fill="none"><circle cx="4.500" cy="5" r="3.700" stroke="#c5c9cc" strokeWidth="1.300" /><path d="M7.500 8l4.500 5" stroke="#858585" strokeWidth="2" /></svg>
              </Search>
              <SiteTitle>The FDRE Public Procurement &amp; Property Administration Agency</SiteTitle>
            </TopLine>
            <EmblemCell><Emblem w={67} h={67} /></EmblemCell>
            <Amharic>በኢፌዲሪ የመንግስት ግዥና ንብረት አስተዳደር ኤጀንሲ</Amharic>
            <FlagCell>
              <svg width="101" height="51" viewBox="0 0 101 51" style={{ display: "block" }}>
                <path fill="#0a8a30" d="M0 0h101v17H0z" />
                <path fill="#fddf09" d="M0 17h101v17H0z" />
                <path fill="#da121a" d="M0 34h101v17H0z" />
                <circle cx="51.500" cy="25.500" r="17" fill="#0f47af" />
                <g stroke="#d8dc43" fill="none" strokeWidth="1.300">
                  <polygon points={starPoints(51.5, 26, 13)} />
                  {[36, 108, 180, 252, 324].map((d) => <path key={d} d="M51.500 20V13" strokeWidth=".8" transform={`rotate(${d} 51.500 26)`} />)}
                </g>
              </svg>
            </FlagCell>
          </Banner>
          <Body>
            <Menu>{menuItems.map((m) => <span key={m}>{m}</span>)}</Menu>
            <Columns>
              <Side>{sideItems.map((s) => <SideItem key={s}>{s}</SideItem>)}</Side>
              <Content>
                <WelcomeBox>
                  <Welcome>Welcome! Supplier [ 0043232870 ]</Welcome>
                  <Actions>{actionItems.map(([label, art]) => <Action key={label}>{art}{label}</Action>)}</Actions>
                </WelcomeBox>
                <Fieldset>
                  <Legend>Business License Information</Legend>
                  <Grid>
                    <Row $head>
                      <HeadCell $plain>Id</HeadCell>
                      <HeadCell $raise><Check type="checkbox" /></HeadCell>
                      <HeadCell>Business License No</HeadCell>
                      <HeadCell>Capital</HeadCell>
                      <HeadCell>Business Type</HeadCell>
                      <HeadCell $drop={6}>
                        Ordering
                        <svg width="13" height="13" viewBox="0 0 13 13" style={{ marginLeft: 1, marginRight: 1 }}>
                          <path d="M1 3l8-2.500L12.500 9 5 12.500z" fill="#333" />
                          <path d="M3.500 3l4-1.300 1 3-4 1.300zM6 8l4-1.500 1 2.500-4 1.500z" fill="#eee" />
                          <path d="M0 1h3v2H0z" fill="#7a9a70" />
                        </svg>
                      </HeadCell>
                    </Row>
                    {rows.map(([id, no, cap, type]) => (
                      <Row key={id}>
                        <Cell $indent={4} $lift={1}>{id}</Cell>
                        <Cell $indent={3} $lift={2}><Check type="checkbox" /></Cell>
                        <Cell $indent={4} $lift={1}>{no}</Cell>
                        <Cell $indent={4} $lift={1}>{cap}</Cell>
                        <Cell $indent={4} $lift={1}>{type}</Cell>
                        <Cell><Order>0</Order></Cell>
                      </Row>
                    ))}
                  </Grid>
                </Fieldset>
              </Content>
            </Columns>
            <Footer>Copyright © 2015, The Federal Public Procurement &amp; Property Administration Agency. All Rights Reserved.</Footer>
          </Body>
        </Page>
      </Browser>
    </Desktop>
  );
}
